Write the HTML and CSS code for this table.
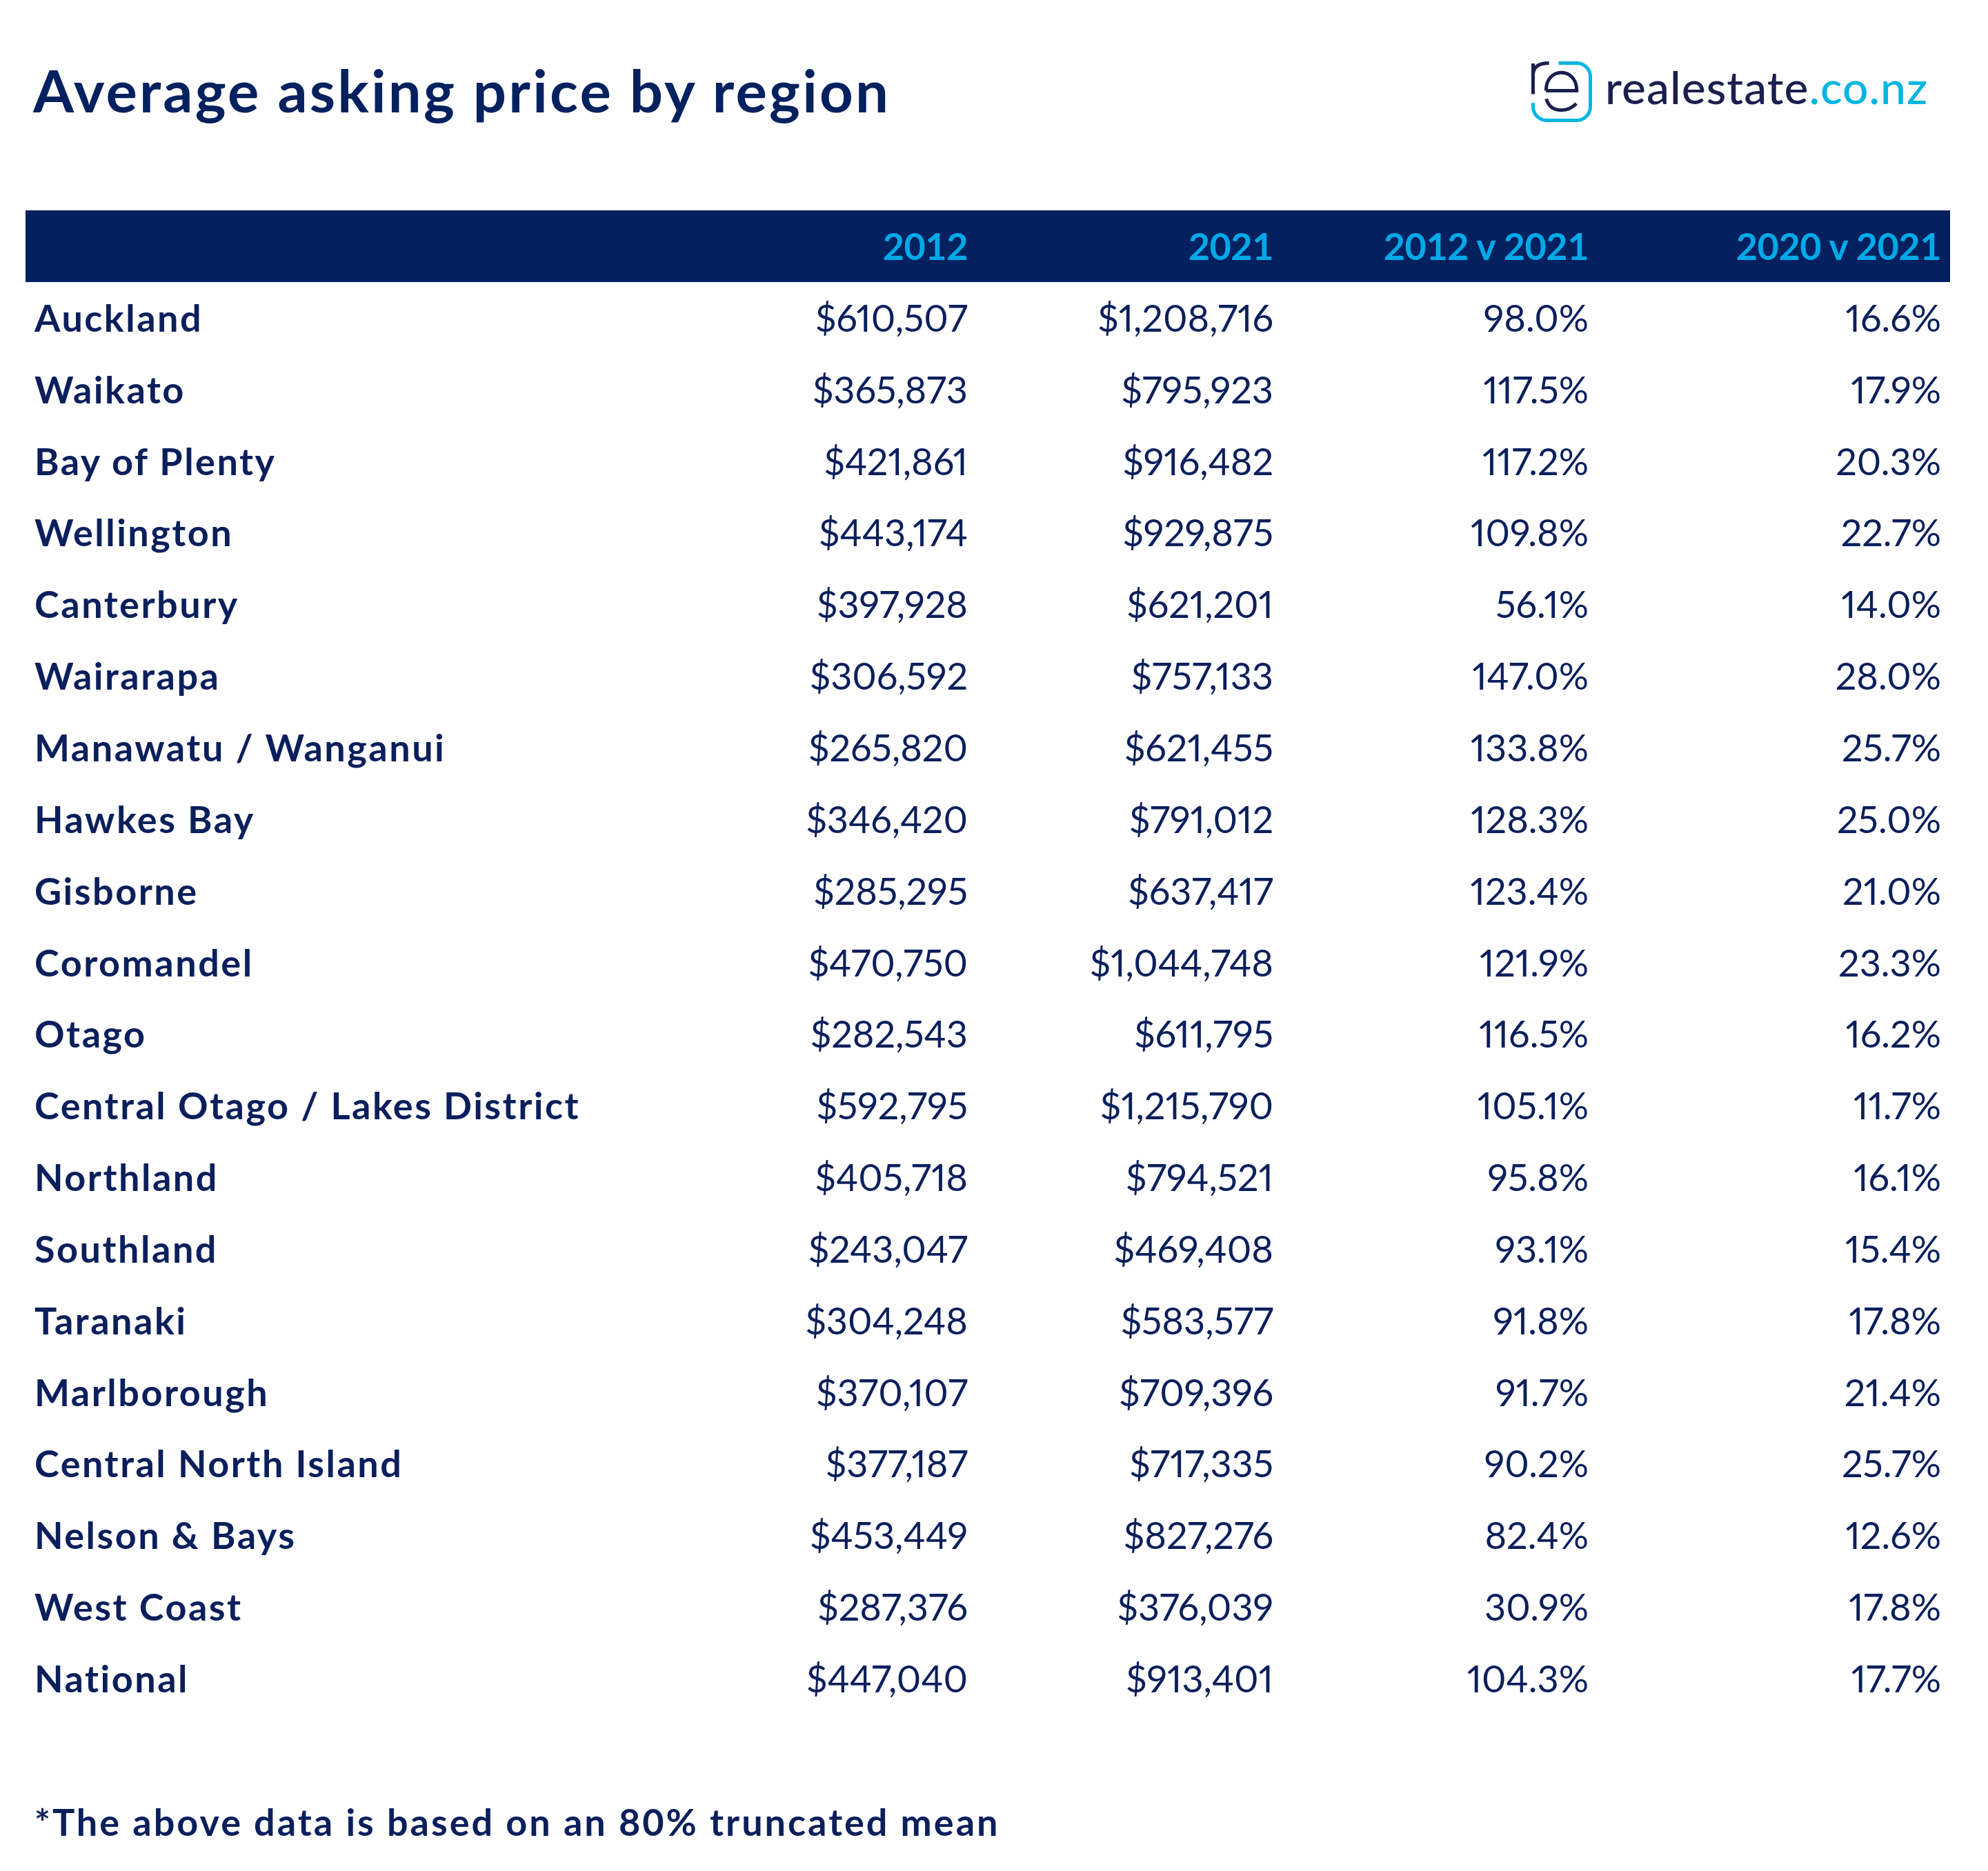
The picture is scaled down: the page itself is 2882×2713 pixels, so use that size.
FILE: index.html
```html
<!DOCTYPE html>
<html lang="en">
<head>
<meta charset="utf-8">
<title>Average asking price by region</title>
<link rel="stylesheet" href="styles.css">
</head>
<body>
<div class="page">
  <header class="top">
    <h1 class="title">Average asking price by region</h1>
    <div class="logo">
      <svg class="logo-mark" viewBox="0 0 90 90" width="89" height="89" aria-hidden="true">
        <path d="M2.5 61 V66.5 A20 20 0 0 0 22.5 86.5 H66.5 A20 20 0 0 0 86.5 66.5 V22.5 A20 20 0 0 0 66.5 2.5 H40" fill="none" stroke="#00b5e2" stroke-width="5"/>
        <path d="M2.5 48 V3 M2.5 20 C2.5 9 10 2.5 26 2.5" fill="none" stroke="#1b1f4f" stroke-width="5"/>
        <path d="M21.5 43 C21.5 27 31 16.5 44 16.5 C57 16.5 66.5 27 66.5 43 H21.5" fill="none" stroke="#1b1f4f" stroke-width="5"/>
        <path d="M22 55 C25 66 33 71.5 44 71.5 C53 71.5 60 68 66 62" fill="none" stroke="#1b1f4f" stroke-width="5"/>
      </svg>
      <span class="logo-text">realestate<span class="logo-accent">.co.nz</span></span>
    </div>
  </header>

  <table class="data">
    <colgroup>
      <col class="c-region">
      <col class="c-2012">
      <col class="c-2021">
      <col class="c-chg">
      <col class="c-yoy">
    </colgroup>
    <thead>
      <tr>
        <th class="label"></th>
        <th>2012</th>
        <th>2021</th>
        <th>2012 v 2021</th>
        <th>2020 v 2021</th>
      </tr>
    </thead>
    <tbody>
      <tr><td class="label">Auckland</td><td>$610,507</td><td>$1,208,716</td><td>98.0%</td><td>16.6%</td></tr>
      <tr><td class="label">Waikato</td><td>$365,873</td><td>$795,923</td><td>117.5%</td><td>17.9%</td></tr>
      <tr><td class="label">Bay of Plenty</td><td>$421,861</td><td>$916,482</td><td>117.2%</td><td>20.3%</td></tr>
      <tr><td class="label">Wellington</td><td>$443,174</td><td>$929,875</td><td>109.8%</td><td>22.7%</td></tr>
      <tr><td class="label">Canterbury</td><td>$397,928</td><td>$621,201</td><td>56.1%</td><td>14.0%</td></tr>
      <tr><td class="label">Wairarapa</td><td>$306,592</td><td>$757,133</td><td>147.0%</td><td>28.0%</td></tr>
      <tr><td class="label">Manawatu / Wanganui</td><td>$265,820</td><td>$621,455</td><td>133.8%</td><td>25.7%</td></tr>
      <tr><td class="label">Hawkes Bay</td><td>$346,420</td><td>$791,012</td><td>128.3%</td><td>25.0%</td></tr>
      <tr><td class="label">Gisborne</td><td>$285,295</td><td>$637,417</td><td>123.4%</td><td>21.0%</td></tr>
      <tr><td class="label">Coromandel</td><td>$470,750</td><td>$1,044,748</td><td>121.9%</td><td>23.3%</td></tr>
      <tr><td class="label">Otago</td><td>$282,543</td><td>$611,795</td><td>116.5%</td><td>16.2%</td></tr>
      <tr><td class="label">Central Otago / Lakes District</td><td>$592,795</td><td>$1,215,790</td><td>105.1%</td><td>11.7%</td></tr>
      <tr><td class="label">Northland</td><td>$405,718</td><td>$794,521</td><td>95.8%</td><td>16.1%</td></tr>
      <tr><td class="label">Southland</td><td>$243,047</td><td>$469,408</td><td>93.1%</td><td>15.4%</td></tr>
      <tr><td class="label">Taranaki</td><td>$304,248</td><td>$583,577</td><td>91.8%</td><td>17.8%</td></tr>
      <tr><td class="label">Marlborough</td><td>$370,107</td><td>$709,396</td><td>91.7%</td><td>21.4%</td></tr>
      <tr><td class="label">Central North Island</td><td>$377,187</td><td>$717,335</td><td>90.2%</td><td>25.7%</td></tr>
      <tr><td class="label">Nelson &amp; Bays</td><td>$453,449</td><td>$827,276</td><td>82.4%</td><td>12.6%</td></tr>
      <tr><td class="label">West Coast</td><td>$287,376</td><td>$376,039</td><td>30.9%</td><td>17.8%</td></tr>
      <tr><td class="label">National</td><td>$447,040</td><td>$913,401</td><td>104.3%</td><td>17.7%</td></tr>
    </tbody>
  </table>

  <p class="note">*The above data is based on an 80% truncated mean</p>
</div>
</body>
</html>
```

FILE: styles.css
```css
html, body {
  margin: 0;
  padding: 0;
  background: #ffffff;
}

body {
  font-family: "Lato", "Noto Sans", "Liberation Sans", sans-serif;
  color: #0b1f5c;
}

.page {
  width: 2790px;
  padding: 80px 0 0 37px;
}

.top {
  display: flex;
  justify-content: space-between;
  align-items: flex-start;
  height: 100px;
  padding: 0 32px 0 11px;
}

.title {
  margin: 0;
  font-size: 85px;
  line-height: 100px;
  font-weight: 700;
  color: #03215f;
  letter-spacing: 3.2px;
}

.logo {
  display: flex;
  align-items: flex-start;
  gap: 18px;
  margin-top: 9px;
}

.logo-mark {
  display: block;
  flex: none;
}

.logo-text {
  font-size: 66px;
  line-height: 80px;
  font-weight: 500;
  letter-spacing: 1px;
  color: #1b1f4f;
  margin-top: -3px;
}

.logo-accent {
  color: #00b5e2;
}

.data {
  margin-top: 125px;
  width: 2790px;
  border-collapse: collapse;
  table-layout: fixed;
}

.c-region { width: 979px; }
.c-2012 { width: 400px; }
.c-2021 { width: 443px; }
.c-chg { width: 457px; }
.c-yoy { width: 511px; }

.data th,
.data td {
  padding: 0 13px 0 13px;
  font-size: 54px;
  line-height: 64px;
  text-align: right;
  white-space: nowrap;
}

.data thead tr {
  height: 104px;
  background: #03215f;
}

.data th {
  color: #00a9e8;
  font-weight: 700;
  letter-spacing: -0.5px;
}

.data tbody tr {
  height: 103.85px;
}

.data td {
  font-weight: 400;
  color: #0b1f5c;
  letter-spacing: 0;
  font-variant-numeric: proportional-nums;
}

.data .label {
  text-align: left;
  font-weight: 700;
  letter-spacing: 2.5px;
}

.note {
  margin: 104px 0 0 13px;
  font-size: 54px;
  line-height: 104px;
  font-weight: 700;
  letter-spacing: 3px;
  color: #0b1f5c;
}
```
